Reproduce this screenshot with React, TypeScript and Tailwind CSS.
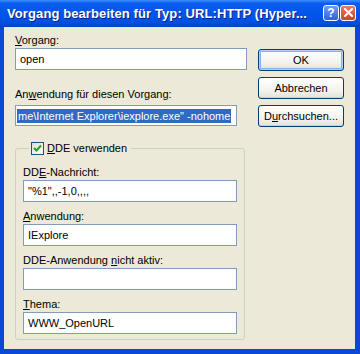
import React from "react";

const font = "font-['Liberation_Sans',Arial,sans-serif]";

const Label: React.FC<{ children: React.ReactNode; className?: string }> = ({ children, className }) => (
  <div className={`h-[14px] leading-[14px] text-[11px] text-black whitespace-nowrap ${className || ""}`}>{children}</div>
);

const TextBox: React.FC<{ children?: React.ReactNode; className?: string }> = ({ children, className }) => (
  <div
    className={`flex items-center overflow-hidden whitespace-nowrap border border-[#7f9db9] bg-white pl-[4px] text-[11px] text-black ${className || ""}`}
  >
    {children}
  </div>
);

const XpButton: React.FC<{ children: React.ReactNode; isDefault?: boolean }> = ({ children, isDefault }) => (
  <button
    className={`h-[22px] w-[86px] rounded-[3px] border border-[#003c74] bg-[linear-gradient(to_bottom,#ffffff_0%,#f4f3ee_60%,#e3e1d7_100%)] text-[11px] text-black ${
      isDefault ? "shadow-[inset_0_0_0_1px_#b9d1fa,inset_0_0_0_2px_#89adee]" : "shadow-[inset_0_-1px_0_#d6d0c5]"
    }`}
  >
    {children}
  </button>
);

export default function App() {
  return (
    <div className={`flex h-[354px] w-[360px] flex-col overflow-hidden bg-[#0a48d8] ${font}`}>
      {/* title bar */}
      <div className="flex h-[27px] shrink-0 items-center bg-[linear-gradient(to_bottom,#3d8ff6_0%,#0a5ff0_12%,#0055ea_50%,#0050e0_85%,#0040c8_100%)] pl-[7px] pr-[4px]">
        <span className="flex-1 whitespace-nowrap pt-[1px] text-[13px] font-bold tracking-[0.1px] text-white [text-shadow:1px_1px_0_#0a1e8a]">
          Vorgang bearbeiten für Typ: URL:HTTP (Hyper...
        </span>
        <div className="mb-[2px] flex gap-[1px]">
          <div className="flex h-[16px] w-[16px] items-center justify-center rounded-[3px] border border-white bg-[linear-gradient(to_bottom,#6d9df7,#2a63e0)] text-[12px] font-bold leading-none text-white">
            ?
          </div>
          <div className="flex h-[16px] w-[16px] items-center justify-center rounded-[3px] border border-white bg-[linear-gradient(to_bottom,#e97d5c,#d2431d)]">
            <svg width="9" height="9" viewBox="0 0 9 9">
              <path d="M1 1 L8 8 M8 1 L1 8" stroke="white" strokeWidth="2" strokeLinecap="square" />
            </svg>
          </div>
        </div>
      </div>

      {/* body */}
      <div className="mb-[5px] ml-[4px] mr-[5px] flex flex-1 gap-[11px] bg-[#ece9d8] pl-[11px] pt-[6px]">
        <div className="flex w-[232px] flex-col">
          <Label>
            <u>V</u>organg:
          </Label>
          <TextBox className="mt-[1px] h-[22px] w-[232px]">open</TextBox>

          <Label className="mt-[17px]">
            An<u>w</u>endung für diesen Vorgang:
          </Label>
          <TextBox className="mt-[4px] h-[21px] w-[222px] !pl-[1px]">
            <span className="bg-[#316ac5] px-[1px] leading-[14px] text-white">
              me\Internet Explorer\iexplore.exe" -nohome
            </span>
          </TextBox>

          <fieldset className="mt-[15px] w-[230px] rounded-[3px] border border-[#d0d0bf] px-[7px] pb-[5px]">
            <legend className="ml-[6px] px-[2px]">
              <div className="flex h-[14px] items-center gap-[3px] pr-[2px] text-[11px] text-black">
                <span className="flex h-[13px] w-[13px] items-center justify-center border border-[#1c5180] bg-[linear-gradient(135deg,#dcdcd7,#ffffff)]">
                  <svg width="9" height="9" viewBox="0 0 9 9">
                    <path d="M1 4 L3.5 6.5 L8 1.5" fill="none" stroke="#21a121" strokeWidth="2" />
                  </svg>
                </span>
                <span>
                  <u>D</u>DE verwenden
                </span>
              </div>
            </legend>

            <Label className="mt-[10px]">
              DD<u>E</u>-Nachricht:
            </Label>
            <TextBox className="mt-[1px] h-[22px] w-[214px]">"%1",,-1,0,,,,</TextBox>

            <Label className="mt-[7px]">
              <u>A</u>nwendung:
            </Label>
            <TextBox className="mt-[1px] h-[22px] w-[214px]">IExplore</TextBox>

            <Label className="mt-[7px]">
              DDE-Anwendung <u>n</u>icht aktiv:
            </Label>
            <TextBox className="mt-[1px] h-[22px] w-[214px]" />

            <Label className="mt-[7px]">
              <u>T</u>hema:
            </Label>
            <TextBox className="mt-[1px] h-[22px] w-[214px]">WWW_OpenURL</TextBox>
          </fieldset>
        </div>

        <div className="mt-[16px] flex flex-col gap-[6px]">
          <XpButton isDefault>OK</XpButton>
          <XpButton>Abbrechen</XpButton>
          <XpButton>
            D<u>u</u>rchsuchen...
          </XpButton>
        </div>
      </div>
    </div>
  );
}
